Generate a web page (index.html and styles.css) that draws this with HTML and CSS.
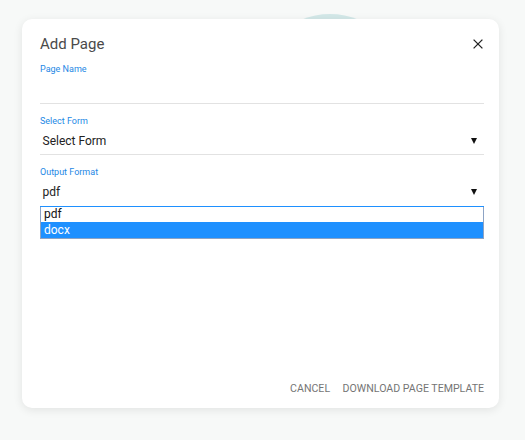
FILE: index.html
```html
<!DOCTYPE html>
<html>
<head>
<meta charset="utf-8">
<link rel="stylesheet" href="styles.css">
</head>
<body>
<div class="backdrop">
  <div class="blob"></div>
  <div class="card">
    <div class="title-row">
      <div class="title">Add Page</div>
      <svg class="close" width="10" height="10" viewBox="0 0 10 10"><path d="M0.6 0.6 L9.4 9.4 M9.4 0.6 L0.6 9.4" stroke="#222" stroke-width="1.3" fill="none"/></svg>
    </div>
    <div class="field first">
      <div class="label">Page Name</div>
      <div class="input"></div>
    </div>
    <div class="field">
      <div class="label">Select Form</div>
      <div class="select"><span>Select Form</span><i class="caret"></i></div>
    </div>
    <div class="field">
      <div class="label">Output Format</div>
      <div class="select focused"><span>pdf</span><i class="caret"></i></div>
      <div class="listbox">
        <div class="opt">pdf</div>
        <div class="opt sel">docx</div>
      </div>
    </div>
    <div class="footer">
      <span class="btn">CANCEL</span>
      <span class="btn">DOWNLOAD PAGE TEMPLATE</span>
    </div>
  </div>
</div>
</body>
</html>
```
FILE: styles.css
```css
html, body {
  margin: 0;
  padding: 0;
  background: #f7f9f8;
  font-family: Roboto, "Liberation Sans", sans-serif;
}
.backdrop {
  position: relative;
  width: 525px;
  height: 440px;
  padding: 19px 0 0 22px;
  box-sizing: border-box;
}
.blob {
  position: absolute;
  left: 255px;
  top: 14px;
  width: 150px;
  height: 150px;
  border-radius: 50%;
  background: #d3e8e8;
}
.card {
  position: relative;
  width: 477px;
  height: 389px;
  box-sizing: border-box;
  background: #fff;
  border-radius: 10px;
  box-shadow: 0 2px 10px rgba(0, 0, 0, 0.09);
  padding: 15px 15px 11px 18px;
  display: flex;
  flex-direction: column;
}
.title-row {
  display: flex;
  justify-content: space-between;
  align-items: center;
  height: 20px;
}
.title {
  font-size: 15px;
  line-height: 20px;
  color: #4a4a4a;
}
.close {
  margin-right: 1px;
  margin-top: -1px;
}
.field {
  margin-top: 10.5px;
}
.field.first {
  margin-top: 9px;
}
.label {
  font-size: 9px;
  line-height: 12px;
  color: #1e88e5;
}
.input {
  height: 28px;
  border-bottom: 1px solid #e2e2e2;
}
.select {
  display: flex;
  justify-content: space-between;
  align-items: center;
  padding: 6.5px 7px 5px 2.5px;
  font-size: 12px;
  line-height: 16px;
  color: #222;
  border-bottom: 1px solid #e2e2e2;
}
.select.focused {
  padding-top: 6.5px;
  padding-bottom: 6px;
  border-bottom-color: #1e90ff;
}
.caret {
  display: block;
  width: 0;
  height: 0;
  border-left: 3px solid transparent;
  border-right: 3px solid transparent;
  border-top: 6px solid #111;
}
.listbox {
  border: 1px solid #8da3c4;
  border-top: none;
  background: #fff;
}
.opt {
  font-size: 12px;
  line-height: 15px;
  height: 15px;
  padding-left: 3px;
  color: #111;
}
.opt.sel {
  height: 16px;
  line-height: 16px;
  background: #1e90ff;
  color: #fff;
}
.footer {
  margin-top: auto;
  display: flex;
  justify-content: flex-end;
  gap: 12.5px;
  font-size: 10.6px;
  line-height: 16px;
  color: #757575;
}
```
